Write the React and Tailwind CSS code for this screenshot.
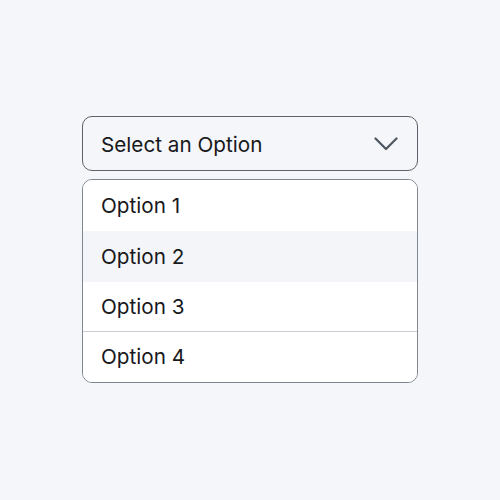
const OPTIONS = [
  { label: 'Option 1', className: 'h-[51px] bg-white' },
  { label: 'Option 2', className: 'h-[51px] bg-[#f3f5f9]' },
  { label: 'Option 3', className: 'h-[50px] bg-white border-b border-[#c9ced5]' },
  { label: 'Option 4', className: 'h-[50px] bg-white' },
];

export default function App() {
  return (
    <div className="min-h-[500px] w-[500px] bg-[#f4f6f9] pt-[116px] px-[82px] font-['Inter',sans-serif] text-[#18191c]">
      <button
        type="button"
        className="flex h-[55px] w-[336px] items-center justify-between rounded-[10px] border border-[#5b626b] bg-[#f4f6f9] pl-[18px] pr-[19px] text-[20.7px] leading-none"
      >
        <span className="pt-[3px]">Select an Option</span>
        <svg width="24" height="14" viewBox="0 0 24 14" fill="none" stroke="#4f5660" strokeWidth="2.2" strokeLinecap="round" strokeLinejoin="round">
          <path d="M1.5 1.5 L12 12 L22.5 1.5" />
        </svg>
      </button>

      <ul className="mt-[8px] w-[336px] overflow-hidden rounded-[10px] border border-[#7f8791] bg-white">
        {OPTIONS.map((option) => (
          <li key={option.label} className={`flex items-center pl-[18px] pt-[1px] text-[20.7px] leading-none ${option.className}`}>
            {option.label}
          </li>
        ))}
      </ul>
    </div>
  );
}
